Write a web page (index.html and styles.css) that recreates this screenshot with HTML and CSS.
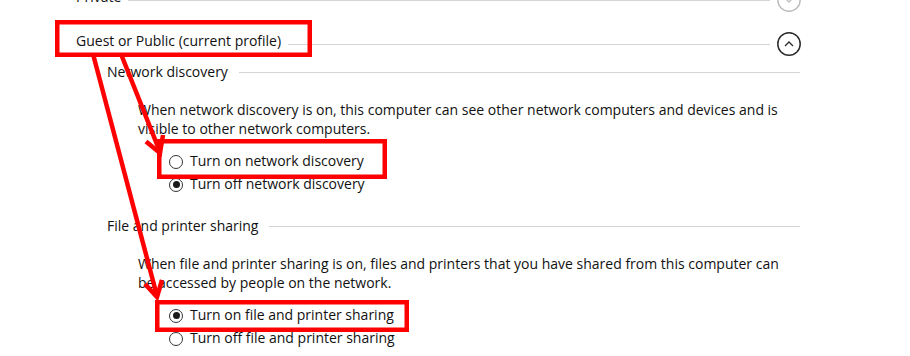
FILE: index.html
```html
<!DOCTYPE html>
<html lang="en">
<head>
<meta charset="utf-8">
<title>Sharing settings</title>
<link rel="stylesheet" href="styles.css">
</head>
<body>
<div class="page">
  <div class="profile profile-collapsed">
    <span class="profile-title">Private</span>
    <span class="rule"></span>
    <span class="toggle toggle-muted">
      <svg width="24" height="24" viewBox="0 0 24 24"><circle cx="12" cy="12" r="11.2" fill="none" stroke="#bdbdbd" stroke-width="1.4"/><path d="M8 10 L12 14 L16 10" fill="none" stroke="#bdbdbd" stroke-width="1.3"/></svg>
    </span>
  </div>
  <div class="profile">
    <span class="profile-title">Guest or Public (current profile)</span>
    <span class="rule"></span>
    <span class="toggle">
      <svg width="24" height="24" viewBox="0 0 24 24"><circle cx="12" cy="12" r="11.2" fill="none" stroke="#2b2b2b" stroke-width="1.5"/><path d="M8 14 L12 10 L16 14" fill="none" stroke="#2b2b2b" stroke-width="1.3"/></svg>
    </span>
  </div>

  <div class="group">
    <div class="group-head"><span class="group-title">Network discovery</span><span class="rule"></span></div>
    <p class="desc">When network discovery is on, this computer can see other network computers and devices and is<br>visible to other network computers.</p>
    <div class="options">
      <label class="option"><span class="radio"></span>Turn on network discovery</label>
      <label class="option"><span class="radio checked"></span>Turn off network discovery</label>
    </div>
  </div>

  <div class="group group-next">
    <div class="group-head"><span class="group-title">File and printer sharing</span><span class="rule"></span></div>
    <p class="desc">When file and printer sharing is on, files and printers that you have shared from this computer can<br>be accessed by people on the network.</p>
    <div class="options">
      <label class="option"><span class="radio checked"></span>Turn on file and printer sharing</label>
      <label class="option"><span class="radio"></span>Turn off file and printer sharing</label>
    </div>
  </div>

  <svg class="annotations" width="910" height="356" viewBox="0 0 910 356">
    <g fill="none" stroke="#ff0000" stroke-width="4.5">
      <rect x="57.25" y="22.25" width="252.5" height="32.5"/>
      <rect x="159.25" y="141.25" width="225.5" height="35.5"/>
      <rect x="157.25" y="302.25" width="249.5" height="27.5"/>
      <line x1="121" y1="54" x2="160" y2="152"/>
      <polyline points="146,141.5 160,153 163,135"/>
      <line x1="93" y1="54" x2="157" y2="296"/>
      <polyline points="145,284 157,297 162,280"/>
    </g>
  </svg>
</div>
</body>
</html>
```

FILE: styles.css
```css
html, body {
  margin: 0;
  padding: 0;
  background: #ffffff;
}

body {
  font-family: "Open Sans", "Noto Sans", sans-serif;
  font-size: 14px;
  color: #111111;
  overflow: hidden;
}

.page {
  position: relative;
  width: 910px;
  height: 356px;
  overflow: hidden;
}

.profile {
  display: flex;
  align-items: center;
  height: 24px;
  margin-left: 76px;
  width: 725px;
}

.profile-collapsed {
  margin-top: -12px;
}

.profile + .profile {
  margin-top: 20px;
}

.profile-title {
  line-height: 20px;
  padding-bottom: 6px;
  white-space: nowrap;
}

.rule {
  flex: 1;
  height: 1px;
  background: #d4d4d4;
}

.profile .rule {
  margin: 0 7px;
}

.toggle {
  width: 24px;
  height: 24px;
  display: flex;
}

.group {
  margin-left: 107px;
  width: 693px;
  margin-top: 6px;
}

.group-next {
  margin-top: 21px;
}

.group-head {
  display: flex;
  align-items: center;
  height: 20px;
  line-height: 20px;
}

.group-title {
  white-space: nowrap;
}

.group-head .rule {
  margin-left: 11px;
}

.desc {
  margin: 18px 0 0 31px;
  line-height: 19px;
  white-space: nowrap;
}

.options {
  margin: 11px 0 0 62px;
  display: flex;
  flex-direction: column;
}

.option {
  display: flex;
  align-items: center;
  height: 23px;
  line-height: 23px;
  white-space: nowrap;
}

.radio {
  position: relative;
  width: 14px;
  height: 14px;
  box-sizing: border-box;
  border: 1px solid #333333;
  border-radius: 50%;
  background: #ffffff;
  margin: 2px 7px 0 0;
  flex: none;
}

.radio.checked::after {
  content: "";
  position: absolute;
  left: 2.5px;
  top: 2.5px;
  width: 7px;
  height: 7px;
  border-radius: 50%;
  background: #1a1a1a;
}

.annotations {
  position: absolute;
  left: 0;
  top: 0;
  pointer-events: none;
}
```
